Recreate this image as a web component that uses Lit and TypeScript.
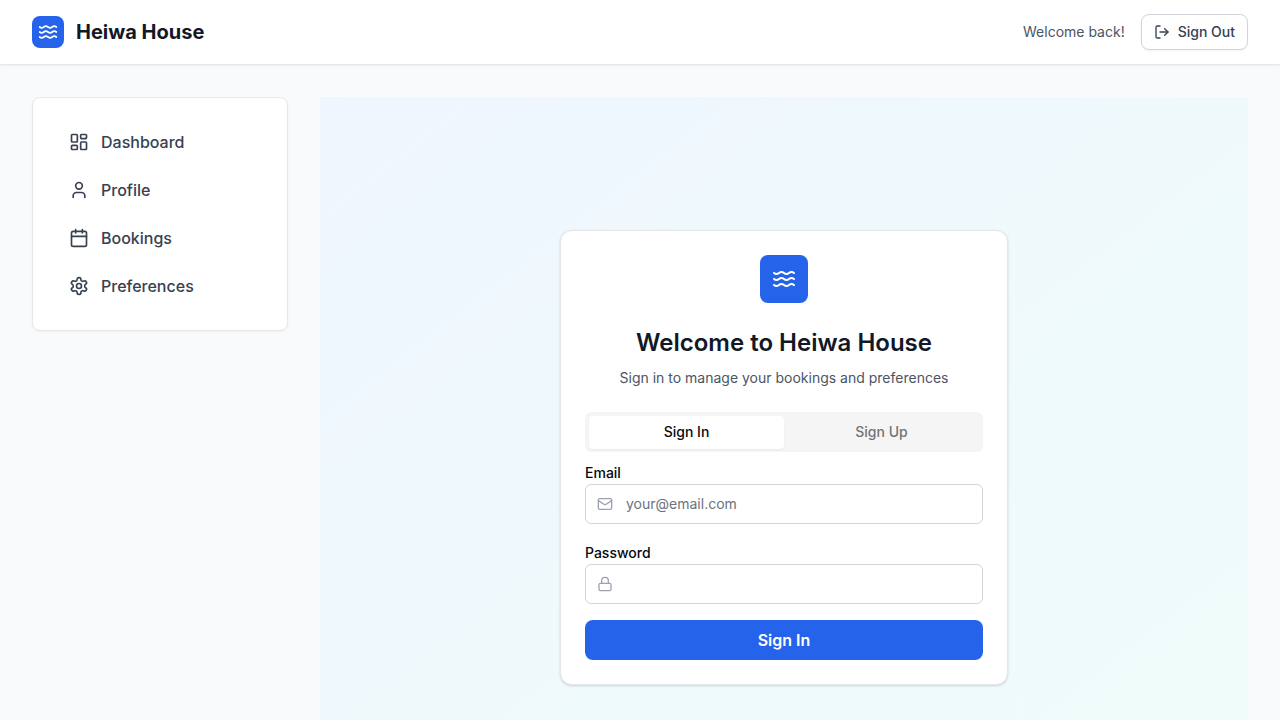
import { LitElement, html, css, svg, type TemplateResult } from "lit";
import { customElement, property, state } from "lit/decorators.js";

const shapes: Record<string, TemplateResult> = {
  waves: svg`<path d="M2 6c.6.5 1.2 1 2.5 1C7 7 7 5 9.5 5c2.6 0 2.4 2 5 2 2.5 0 2.5-2 5-2 1.3 0 1.9.5 2.5 1"/><path d="M2 12c.6.5 1.2 1 2.5 1 2.5 0 2.5-2 5-2 2.6 0 2.4 2 5 2 2.5 0 2.5-2 5-2 1.3 0 1.9.5 2.5 1"/><path d="M2 18c.6.5 1.2 1 2.5 1 2.5 0 2.5-2 5-2 2.6 0 2.4 2 5 2 2.5 0 2.5-2 5-2 1.3 0 1.9.5 2.5 1"/>`,
  logout: svg`<path d="M9 21H5a2 2 0 0 1-2-2V5a2 2 0 0 1 2-2h4"/><polyline points="16 17 21 12 16 7"/><line x1="21" x2="9" y1="12" y2="12"/>`,
  dashboard: svg`<rect width="7" height="9" x="3" y="3" rx="1"/><rect width="7" height="5" x="14" y="3" rx="1"/><rect width="7" height="9" x="14" y="12" rx="1"/><rect width="7" height="5" x="3" y="16" rx="1"/>`,
  user: svg`<path d="M19 21v-2a4 4 0 0 0-4-4H9a4 4 0 0 0-4 4v2"/><circle cx="12" cy="7" r="4"/>`,
  calendar: svg`<path d="M8 2v4"/><path d="M16 2v4"/><rect width="18" height="18" x="3" y="4" rx="2"/><path d="M3 10h18"/>`,
  settings: svg`<path d="M12.22 2h-.44a2 2 0 0 0-2 2v.18a2 2 0 0 1-1 1.73l-.43.25a2 2 0 0 1-2 0l-.15-.08a2 2 0 0 0-2.73.73l-.22.38a2 2 0 0 0 .73 2.73l.15.1a2 2 0 0 1 1 1.72v.51a2 2 0 0 1-1 1.74l-.15.09a2 2 0 0 0-.73 2.73l.22.38a2 2 0 0 0 2.73.73l.15-.08a2 2 0 0 1 2 0l.43.25a2 2 0 0 1 1 1.73V20a2 2 0 0 0 2 2h.44a2 2 0 0 0 2-2v-.18a2 2 0 0 1 1-1.73l.43-.25a2 2 0 0 1 2 0l.15.08a2 2 0 0 0 2.73-.73l.22-.39a2 2 0 0 0-.73-2.73l-.15-.08a2 2 0 0 1-1-1.74v-.5a2 2 0 0 1 1-1.74l.15-.09a2 2 0 0 0 .73-2.73l-.22-.38a2 2 0 0 0-2.73-.73l-.15.08a2 2 0 0 1-2 0l-.43-.25a2 2 0 0 1-1-1.73V4a2 2 0 0 0-2-2z"/><circle cx="12" cy="12" r="3"/>`,
  mail: svg`<rect width="20" height="16" x="2" y="4" rx="2"/><path d="m22 7-8.97 5.7a1.94 1.94 0 0 1-2.06 0L2 7"/>`,
  lock: svg`<rect width="18" height="11" x="3" y="11" rx="2"/><path d="M7 11V7a5 5 0 0 1 10 0v4"/>`,
};

@customElement("line-icon")
class LineIcon extends LitElement {
  @property() name = "";
  static styles = css`
    :host { display: block; flex: none; width: 16px; height: 16px; }
    .glyph { display: block; width: 100%; height: 100%; }
  `;
  render() {
    return html`<svg class="glyph" viewBox="0 0 24 24" fill="none" stroke="currentColor" stroke-width="2"
      stroke-linecap="round" stroke-linejoin="round" aria-hidden="true">${shapes[this.name]}</svg>`;
  }
}

const links = [
  { label: "Dashboard", icon: "dashboard" },
  { label: "Profile", icon: "user" },
  { label: "Bookings", icon: "calendar" },
  { label: "Preferences", icon: "settings" },
];

@customElement("app-root")
class AppRoot extends LitElement {
  @state() private tab = "Sign In";

  static styles = css`
    :host {
      display: block;
      min-height: 100vh;
      background: #f9fafb;
      color: #0a0a0a;
      font: 400 16px/24px Inter, sans-serif;
      -webkit-font-smoothing: antialiased;
    }
    *, *::before, *::after { box-sizing: border-box; }
    h1, h2, p { margin: 0; }
    button, input { font: inherit; color: inherit; margin: 0; }
    button { cursor: pointer; }

    .topbar { background: #fff; border-bottom: 1px solid #e5e7eb; box-shadow: 0 1px 2px rgb(0 0 0 / 0.05); }
    .bar {
      display: flex; align-items: center; justify-content: space-between;
      max-width: 1280px; height: 64px; margin: 0 auto; padding: 0 32px;
    }
    .brand, .account { display: flex; align-items: center; }
    .brand { gap: 12px; }
    .account { gap: 16px; }
    .logo {
      display: grid; place-items: center; width: 32px; height: 32px;
      border-radius: 8px; background: #2563eb; color: #fff;
    }
    .logo line-icon { width: 20px; height: 20px; }
    .logo.large { width: 48px; height: 48px; margin: 0 auto 24px; }
    .logo.large line-icon { width: 24px; height: 24px; }
    .name { font-size: 20px; line-height: 28px; font-weight: 700; color: #111827; }
    .greeting { font-size: 14px; line-height: 20px; color: #4b5563; }
    .signout {
      display: flex; align-items: center; gap: 8px; height: 36px; padding: 0 12px;
      border: 1px solid #d1d5db; border-radius: 8px; background: #fff; color: #374151;
      font-size: 14px; line-height: 20px; font-weight: 500;
      box-shadow: 0 1px 2px rgb(0 0 0 / 0.05);
    }

    .page {
      display: grid; grid-template-columns: 256px minmax(0, 1fr); align-items: start; gap: 32px;
      max-width: 1280px; margin: 0 auto; padding: 32px;
    }
    .menu {
      display: grid; gap: 8px; padding: 24px;
      border: 1px solid #e5e7eb; border-radius: 8px; background: #fff;
      box-shadow: 0 1px 2px rgb(0 0 0 / 0.05);
    }
    .link {
      display: flex; align-items: center; gap: 12px; padding: 8px 12px;
      border-radius: 6px; color: #374151; font-weight: 500; text-decoration: none;
    }
    .link line-icon { width: 20px; height: 20px; }

    .stage {
      display: grid; place-items: center; min-height: 100vh; padding: 16px;
      background: linear-gradient(to bottom right, #eff6ff, #f0fdfa);
    }
    .card {
      width: 100%; max-width: 448px; padding: 24px;
      border: 1px solid #e5e7eb; border-radius: 12px; background: #fff;
      box-shadow: 0 1px 3px rgb(0 0 0 / 0.1), 0 1px 2px rgb(0 0 0 / 0.06);
    }
    .title { font-size: 24px; line-height: 32px; font-weight: 600; text-align: center; color: #111827; }
    .lead { margin: 9px 0 24px; font-size: 14px; line-height: 20px; text-align: center; color: #4b5563; }
    .tabs {
      display: grid; grid-template-columns: 1fr 1fr; height: 40px; padding: 4px 4px 3px; margin-bottom: 8px;
      border-radius: 6px; background: #f5f5f5;
    }
    .tab {
      padding: 0; border: 0; border-radius: 4px; background: none; color: #737373;
      font-size: 14px; line-height: 20px; font-weight: 500;
    }
    .tab[aria-selected="true"] { background: #fff; color: #0a0a0a; box-shadow: 0 1px 2px rgb(0 0 0 / 0.05); }
    .form { display: grid; gap: 16px; }
    .label { display: block; padding-top: 2px; font-size: 14px; line-height: 22px; font-weight: 500; color: #030712; }
    .box { position: relative; color: #9ca3af; }
    .box line-icon { position: absolute; left: 12px; top: 12px; }
    .input {
      display: block; width: 100%; height: 40px; padding: 0 12px 0 40px;
      border: 1px solid #d1d5db; border-radius: 6px; background: #fff; color: #111827;
      font-size: 14px; line-height: 20px;
    }
    .input::placeholder { color: #6b7280; opacity: 1; }
    .submit {
      height: 40px; padding: 0 16px; border: 0; border-radius: 8px;
      background: #2563eb; color: #fff; font-weight: 600;
    }
    @media (max-width: 800px) { .page { grid-template-columns: minmax(0, 1fr); } }
  `;

  render() {
    return html`
      <header class="topbar">
        <div class="bar">
          <div class="brand">
            <div class="logo"><line-icon name="waves"></line-icon></div>
            <h1 class="name">Heiwa House</h1>
          </div>
          <div class="account">
            <span class="greeting">Welcome back!</span>
            <button class="signout" type="button"><line-icon name="logout"></line-icon>Sign Out</button>
          </div>
        </div>
      </header>
      <div class="page">
        <nav class="menu">
          ${links.map((l) => html`<a class="link" href="#"><line-icon name=${l.icon}></line-icon>${l.label}</a>`)}
        </nav>
        <main class="stage">
          <section class="card">
            <div class="logo large"><line-icon name="waves"></line-icon></div>
            <h2 class="title">Welcome to Heiwa House</h2>
            <p class="lead">Sign in to manage your bookings and preferences</p>
            <div class="tabs" role="tablist">
              ${["Sign In", "Sign Up"].map((t) => html`<button class="tab" type="button" role="tab"
                aria-selected=${this.tab === t ? "true" : "false"} @click=${() => (this.tab = t)}>${t}</button>`)}
            </div>
            <form class="form" @submit=${(e: Event) => e.preventDefault()}>
              <div>
                <label class="label" for="email">Email</label>
                <div class="box">
                  <input class="input" id="email" type="email" placeholder="your@email.com" />
                  <line-icon name="mail"></line-icon>
                </div>
              </div>
              <div>
                <label class="label" for="password">Password</label>
                <div class="box">
                  <input class="input" id="password" type="password" />
                  <line-icon name="lock"></line-icon>
                </div>
              </div>
              <button class="submit" type="submit">${this.tab}</button>
            </form>
          </section>
        </main>
      </div>
    `;
  }
}
